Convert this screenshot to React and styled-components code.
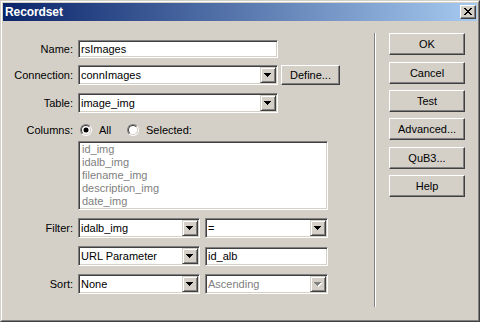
import React from 'react';
import styled, { createGlobalStyle } from 'styled-components';

const Global = createGlobalStyle`
  html, body { margin: 0; padding: 0; background: #D4D0C8; }
  body {
    width: 480px; height: 322px; overflow: hidden;
    font-family: "Liberation Sans", Arial, sans-serif;
    font-size: 11px; color: #000;
  }
  * { box-sizing: border-box; }
`;

const Window = styled.div`
  width: 480px; height: 322px;
  background: #D4D0C8;
  border: 1px solid;
  border-color: #D4D0C8 #404040 #404040 #D4D0C8;
  display: flex;
`;

const Frame = styled.div`
  flex: 1;
  border: 1px solid;
  border-color: #fff #808080 #808080 #fff;
  padding: 1px;
  display: flex;
  flex-direction: column;
`;

const TitleBar = styled.div`
  height: 18px;
  flex: none;
  display: flex;
  align-items: center;
  justify-content: space-between;
  padding: 0 1px 0 2px;
  background: linear-gradient(to right, #0A246A, #A6CAF0);
`;

const Title = styled.span`
  color: #fff;
  font-weight: bold;
  font-size: 12px;
  letter-spacing: -0.1px;
`;

const CloseButton = styled.div`
  width: 16px; height: 14px;
  background: #D4D0C8;
  border: 1px solid;
  border-color: #fff #404040 #404040 #fff;
  box-shadow: inset -1px -1px #808080;
  display: flex;
  align-items: center;
  justify-content: center;
  padding: 0 1px 1px 0;
`;

const Body = styled.div`
  flex: 1;
  display: flex;
`;

const LeftPanel = styled.div`
  width: 371px;
  flex: none;
  padding-top: 19px;
  display: flex;
  flex-direction: column;
`;

const Row = styled.div`
  display: grid;
  grid-template-columns: 70px auto;
  column-gap: 5px;
  align-items: center;
  height: ${p => p.$h}px;
  margin-top: ${p => p.$mt || 0}px;
`;

const Label = styled.span`
  text-align: right;
  white-space: nowrap;
`;

const Controls = styled.div`
  display: flex;
  align-items: center;
  gap: ${p => (p.$gap ?? 5)}px;
  height: 100%;
`;

const Sunken = styled.div`
  width: ${p => p.$w}px;
  height: ${p => p.$h || 20}px;
  background: #fff;
  border: 1px solid;
  border-color: #808080 #fff #fff #808080;
  box-shadow: inset 1px 1px #404040, inset -1px -1px #D4D0C8;
  padding: 1px;
  display: flex;
  align-items: center;
`;

const FieldText = styled.span`
  flex: 1;
  padding-left: 1px;
  white-space: nowrap;
  overflow: hidden;
  color: ${p => (p.$disabled ? '#808080' : '#000')};
`;

const DropButton = styled.div`
  width: 16px;
  height: 100%;
  flex: none;
  background: #D4D0C8;
  border: 1px solid;
  border-color: #D4D0C8 #404040 #404040 #D4D0C8;
  box-shadow: inset 1px 1px #fff, inset -1px -1px #808080;
  display: flex;
  align-items: center;
  justify-content: center;
`;

const PushButton = styled.div`
  width: ${p => p.$w}px;
  height: ${p => p.$h}px;
  margin-top: ${p => p.$mt || 0}px;
  flex: none;
  background: #D4D0C8;
  border: 1px solid;
  border-color: #fff #404040 #404040 #fff;
  box-shadow: inset -1px -1px #808080;
  display: flex;
  align-items: center;
  justify-content: center;
  padding-bottom: 1px;
  white-space: nowrap;
`;

const ListBox = styled.div`
  width: 250px;
  height: 69px;
  background: #fff;
  border: 1px solid;
  border-color: #808080 #fff #fff #808080;
  box-shadow: inset 1px 1px #404040, inset -1px -1px #D4D0C8;
  padding: 1px 2px 1px 3px;
  display: flex;
  flex-direction: column;
`;

const ListItem = styled.div`
  height: 13px;
  line-height: 13px;
  color: #808080;
  white-space: nowrap;
`;

const RadioGroup = styled.div`
  display: flex;
  align-items: center;
  padding-left: 2px;
  height: 100%;
`;

const RadioOption = styled.label`
  display: flex;
  align-items: center;
  gap: 7px;
  width: ${p => (p.$w ? `${p.$w}px` : 'auto')};
`;

const RadioOuter = styled.span`
  width: 12px; height: 12px;
  border-radius: 50%;
  border: 1px solid;
  border-color: #808080 #fff #fff #808080;
  display: flex;
`;

const RadioInner = styled.span`
  flex: 1;
  border-radius: 50%;
  border: 1px solid;
  border-color: #404040 #D4D0C8 #D4D0C8 #404040;
  background: #fff;
  display: flex;
  align-items: center;
  justify-content: center;
`;

const RadioDot = styled.span`
  width: 4px; height: 4px;
  border-radius: 50%;
  background: #000;
  box-shadow: 0 0 0 0.5px #000;
`;

const Divider = styled.div`
  width: 2px;
  flex: none;
  margin-top: 12px;
  height: 274px;
  border-left: 1px solid #808080;
  border-right: 1px solid #fff;
`;

const ButtonColumn = styled.div`
  margin-left: 13px;
  margin-top: 12px;
  display: flex;
  flex-direction: column;
`;

const Arrow = ({ disabled }) => (
  <svg width="8" height="5" viewBox="0 0 8 5" shapeRendering="crispEdges">
    {disabled && (
      <g fill="#fff">
        <rect x="1" y="1" width="7" height="1" />
        <rect x="2" y="2" width="5" height="1" />
        <rect x="3" y="3" width="3" height="1" />
        <rect x="4" y="4" width="1" height="1" />
      </g>
    )}
    <g fill={disabled ? '#808080' : '#000'}>
      <rect x="0" y="0" width="7" height="1" />
      <rect x="1" y="1" width="5" height="1" />
      <rect x="2" y="2" width="3" height="1" />
      <rect x="3" y="3" width="1" height="1" />
    </g>
  </svg>
);

const CloseGlyph = () => (
  <svg width="8" height="7" viewBox="0 0 8 7" shapeRendering="crispEdges" fill="#000">
    <rect x="0" y="0" width="2" height="1" />
    <rect x="6" y="0" width="2" height="1" />
    <rect x="1" y="1" width="2" height="1" />
    <rect x="5" y="1" width="2" height="1" />
    <rect x="2" y="2" width="4" height="1" />
    <rect x="3" y="3" width="2" height="1" />
    <rect x="2" y="4" width="4" height="1" />
    <rect x="1" y="5" width="2" height="1" />
    <rect x="5" y="5" width="2" height="1" />
    <rect x="0" y="6" width="2" height="1" />
    <rect x="6" y="6" width="2" height="1" />
  </svg>
);

const Select = ({ w, value, disabled }) => (
  <Sunken $w={w} $h={20}>
    <FieldText $disabled={disabled}>{value}</FieldText>
    <DropButton>
      <Arrow disabled={disabled} />
    </DropButton>
  </Sunken>
);

const TextInput = ({ w, h = 18, value }) => (
  <Sunken $w={w} $h={h}>
    <FieldText>{value}</FieldText>
  </Sunken>
);

const Radio = ({ checked, label, w }) => (
  <RadioOption $w={w}>
    <RadioOuter>
      <RadioInner>{checked && <RadioDot />}</RadioInner>
    </RadioOuter>
    <span>{label}</span>
  </RadioOption>
);

const columns = ['id_img', 'idalb_img', 'filename_img', 'description_img', 'date_img'];
const actions = [
  { label: 'OK', gap: 0 },
  { label: 'Cancel', gap: 7 },
  { label: 'Test', gap: 6 },
  { label: 'Advanced...', gap: 6 },
  { label: 'QuB3...', gap: 7 },
  { label: 'Help', gap: 6 },
];

export default function App() {
  return (
    <>
      <Global />
      <Window>
        <Frame>
          <TitleBar>
            <Title>Recordset</Title>
            <CloseButton>
              <CloseGlyph />
            </CloseButton>
          </TitleBar>
          <Body>
            <LeftPanel>
              <Row $h={18}>
                <Label>Name:</Label>
                <Controls>
                  <TextInput w={200} value="rsImages" />
                </Controls>
              </Row>
              <Row $h={20} $mt={7}>
                <Label>Connection:</Label>
                <Controls $gap={3}>
                  <Select w={200} value="connImages" />
                  <PushButton $w={59} $h={20}>Define...</PushButton>
                </Controls>
              </Row>
              <Row $h={20} $mt={8}>
                <Label>Table:</Label>
                <Controls>
                  <Select w={200} value="image_img" />
                </Controls>
              </Row>
              <Row $h={16} $mt={9}>
                <Label>Columns:</Label>
                <RadioGroup>
                  <Radio checked label="All" w={47} />
                  <Radio label="Selected:" />
                </RadioGroup>
              </Row>
              <Row $h={69} $mt={3}>
                <span />
                <ListBox>
                  {columns.map(c => (
                    <ListItem key={c}>{c}</ListItem>
                  ))}
                </ListBox>
              </Row>
              <Row $h={20} $mt={8}>
                <Label>Filter:</Label>
                <Controls>
                  <Select w={122} value="idalb_img" />
                  <Select w={123} value="=" />
                </Controls>
              </Row>
              <Row $h={19} $mt={8}>
                <span />
                <Controls>
                  <Select w={122} value="URL Parameter" />
                  <TextInput w={123} h={19} value="id_alb" />
                </Controls>
              </Row>
              <Row $h={20} $mt={9}>
                <Label>Sort:</Label>
                <Controls>
                  <Select w={122} value="None" />
                  <Select w={123} value="Ascending" disabled />
                </Controls>
              </Row>
            </LeftPanel>
            <Divider />
            <ButtonColumn>
              {actions.map(a => (
                <PushButton key={a.label} $w={76} $h={22} $mt={a.gap}>{a.label}</PushButton>
              ))}
            </ButtonColumn>
          </Body>
        </Frame>
      </Window>
    </>
  );
}
